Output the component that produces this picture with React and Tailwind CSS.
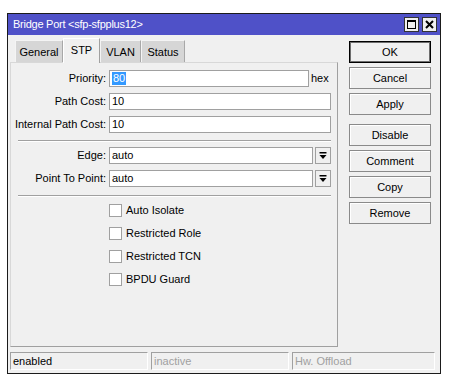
import React from "react";

function Drop() {
  return (
    <div className="w-[16px] h-[17px] ml-[2px] border border-[#a0a0a0] bg-[#f0f0f0] flex items-center justify-center">
      <svg width="8" height="8" viewBox="0 0 8 8">
        <rect x="0.5" y="0" width="7" height="1.5" fill="#000" />
        <polygon points="0.5,3 7.5,3 4,7" fill="#000" />
      </svg>
    </div>
  );
}

function Row({ label, children, className = "" }) {
  return (
    <div className={"flex items-center h-[17px] " + className}>
      <div className="w-[96px] pr-[1px] flex justify-end whitespace-nowrap shrink-0 leading-none">{label}</div>
      <div className="ml-[2px] flex items-center">{children}</div>
    </div>
  );
}

function Input({ w, children }) {
  return (
    <div
      className="h-[17px] bg-white border border-[#a0a0a0] flex items-center pl-[2px] leading-none"
      style={{ width: w }}
    >
      {children}
    </div>
  );
}

function Sep({ className = "" }) {
  return <div className={"ml-[7px] w-[313px] h-[2px] border-t border-[#a0a0a0] border-b border-b-white " + className} />;
}

function Check({ label, className = "" }) {
  return (
    <div className={"flex items-center h-[13px] ml-[98px] " + className}>
      <div className="w-[13px] h-[13px] bg-white border border-[#a0a0a0]" />
      <div className="ml-[4px] leading-none">{label}</div>
    </div>
  );
}

function Btn({ children, def = false, className = "" }) {
  return (
    <div
      className={
        "w-[82px] h-[22px] flex items-center justify-center bg-[#f0f0f0] leading-none " +
        (def
          ? "border border-black shadow-[inset_0_0_0_1px_#6e6e6e] "
          : "border border-[#8a8a8a] shadow-[inset_1px_1px_0_0_#ffffff] ") +
        className
      }
    >
      {children}
    </div>
  );
}

function Tab({ children, active = false, w }) {
  return active ? (
    <div
      className="h-[25px] bg-[#f0f0f0] border-t border-l border-white border-r border-r-[#a0a0a0] flex items-center justify-center pb-[2px] relative z-10 -mb-[1px]"
      style={{ width: w }}
    >
      {children}
    </div>
  ) : (
    <div
      className="h-[22px] bg-[#d6d6d6] border-t border-l border-[#f4f4f4] border-r border-r-[#a8a8a8] flex items-center justify-center pt-[1px]"
      style={{ width: w }}
    >
      {children}
    </div>
  );
}

export default function App() {
  return (
    <div
      className="min-h-screen bg-white pl-[7px] pt-[13px] text-[11px] text-black"
      style={{ fontFamily: '"Liberation Sans", Arial, sans-serif' }}
    >
      <div className="w-[434px] h-[361px] border border-[#1b1b1b] bg-[#f0f0f0] flex flex-col">
        {/* title bar */}
        <div className="h-[21px] bg-[#4f51c8] flex items-center pl-[5px] pr-[3px] text-white shrink-0">
          <span className="leading-none tracking-[-0.25px]">Bridge Port &lt;sfp-sfpplus12&gt;</span>
          <div className="ml-auto flex items-center gap-[3px]">
            <div className="w-[15px] h-[15px] bg-[#f0f0f0] border border-[#333] flex items-center justify-center">
              <div className="w-[9px] h-[9px] border border-black border-t-2" />
            </div>
            <div className="w-[15px] h-[15px] bg-[#f0f0f0] border border-[#333] flex items-center justify-center">
              <svg width="9" height="9" viewBox="0 0 9 9">
                <path d="M1 1 L8 8 M8 1 L1 8" stroke="#000" strokeWidth="2" />
              </svg>
            </div>
          </div>
        </div>

        {/* body */}
        <div className="flex flex-1">
          <div className="ml-[2px] flex flex-col">
            <div className="h-[27px] flex items-end pl-[5px]">
              <Tab w={48}>General</Tab>
              <Tab w={37} active>
                STP
              </Tab>
              <Tab w={41}>VLAN</Tab>
              <Tab w={44}>Status</Tab>
            </div>
            <div className="w-[328px] h-[285px] border border-t-[#d8d8d8] border-l-[#d8d8d8] border-r-[#a0a0a0] border-b-[#a0a0a0] flex flex-col pt-[7px]">
              <Row label="Priority:">
                <Input w={200}>
                  <span className="bg-[#3399ff] text-white px-[1px] leading-[13px]">80</span>
                </Input>
                <span className="ml-[2px] leading-none">hex</span>
              </Row>
              <Row label="Path Cost:" className="mt-[6px]">
                <Input w={222}>10</Input>
              </Row>
              <Row label="Internal Path Cost:" className="mt-[6px]">
                <Input w={222}>10</Input>
              </Row>
              <Sep className="mt-[7px]" />
              <Row label="Edge:" className="mt-[5px]">
                <Input w={204}>auto</Input>
                <Drop />
              </Row>
              <Row label="Point To Point:" className="mt-[6px]">
                <Input w={204}>auto</Input>
                <Drop />
              </Row>
              <Sep className="mt-[8px]" />
              <Check label="Auto Isolate" className="mt-[7px]" />
              <Check label="Restricted Role" className="mt-[10px]" />
              <Check label="Restricted TCN" className="mt-[10px]" />
              <Check label="BPDU Guard" className="mt-[10px]" />
            </div>
          </div>
          <div className="ml-[11px] mt-[6px] flex flex-col">
            <Btn def>OK</Btn>
            <Btn className="mt-[4px]">Cancel</Btn>
            <Btn className="mt-[4px]">Apply</Btn>
            <Btn className="mt-[9px]">Disable</Btn>
            <Btn className="mt-[4px]">Comment</Btn>
            <Btn className="mt-[4px]">Copy</Btn>
            <Btn className="mt-[4px]">Remove</Btn>
          </div>
        </div>

        {/* status bar */}
        <div className="flex ml-[2px] mt-[4px] mb-[3px] gap-[3px] shrink-0">
          <div className="w-[138px] h-[18px] border border-t-[#a0a0a0] border-l-[#a0a0a0] border-r-white border-b-white flex items-center pl-[2px] leading-none">
            enabled
          </div>
          <div className="w-[138px] h-[18px] border border-t-[#a0a0a0] border-l-[#a0a0a0] border-r-white border-b-white flex items-center pl-[2px] leading-none text-[#a0a0a0]">
            inactive
          </div>
          <div className="w-[143px] h-[18px] border border-t-[#a0a0a0] border-l-[#a0a0a0] border-r-white border-b-white flex items-center pl-[2px] leading-none text-[#a0a0a0]">
            Hw. Offload
          </div>
        </div>
      </div>
    </div>
  );
}
